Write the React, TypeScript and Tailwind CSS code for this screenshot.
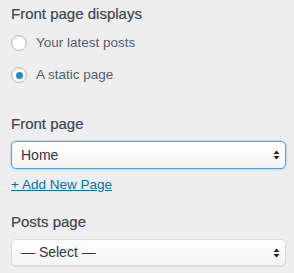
const Arrows = () => (
  <svg width="7" height="12" viewBox="0 0 7 12" className="shrink-0">
    <polygon points="3.5,1.5 6.5,5 0.5,5" fill="#222" />
    <polygon points="0.5,7 6.5,7 3.5,10.5" fill="#222" />
  </svg>
)

const Radio = ({ checked, label }: { checked?: boolean; label: string }) => (
  <label className="flex items-center gap-[9px] h-[16px]">
    <span className="w-[16px] h-[16px] rounded-full border border-[#b4b9be] bg-white shadow-[inset_0_1px_2px_rgba(0,0,0,0.1)] flex items-center justify-center">
      {checked && <span className="w-[7px] h-[7px] rounded-full bg-[#1e8cbe]" />}
    </span>
    <span className="text-[13.5px] text-[#555d66]">{label}</span>
  </label>
)

const Select = ({ value, focused }: { value: string; focused?: boolean }) => (
  <div
    className={
      focused
        ? "h-[28px] flex items-center justify-between pl-[9px] pr-[5px] rounded-[5px] border border-[#5b9dd9] bg-gradient-to-b from-white to-[#f3f3f3] shadow-[0_0_2px_rgba(30,140,190,0.6)]"
        : "h-[27px] flex items-center justify-between pl-[9px] pr-[5px] rounded-[5px] border border-[#dcdcdc] bg-gradient-to-b from-white to-[#f4f4f4] shadow-[0_1px_1px_rgba(0,0,0,0.08)]"
    }
  >
    <span className="text-[14px] text-[#32373c]">{value}</span>
    <Arrows />
  </div>
)

export default function App() {
  return (
    <div className="w-[294px] h-[273px] bg-[#eeeeee] pl-[11px] pr-[8px] pt-[6px] overflow-hidden" style={{ fontFamily: '"Liberation Sans", Arial, sans-serif' }}>
      <p className="text-[15px] text-[#3f454b] leading-[16px] [-webkit-text-stroke:0.2px_#3f454b]">Front page displays</p>
      <div className="flex flex-col gap-[16px] mt-[13px]">
        <Radio label="Your latest posts" />
        <Radio checked label="A static page" />
      </div>

      <p className="mt-[33px] text-[15px] text-[#3f454b] leading-[16px] [-webkit-text-stroke:0.2px_#3f454b]">Front page</p>
      <div className="mt-[9px]">
        <Select focused value="Home" />
      </div>
      <a href="#" className="block mt-[8px] text-[13.5px] text-[#0073aa] underline leading-[16px]">+ Add New Page</a>

      <p className="mt-[21px] text-[15px] text-[#3f454b] leading-[16px] [-webkit-text-stroke:0.2px_#3f454b]">Posts page</p>
      <div className="mt-[9px]">
        <Select value="— Select —" />
      </div>
    </div>
  )
}
